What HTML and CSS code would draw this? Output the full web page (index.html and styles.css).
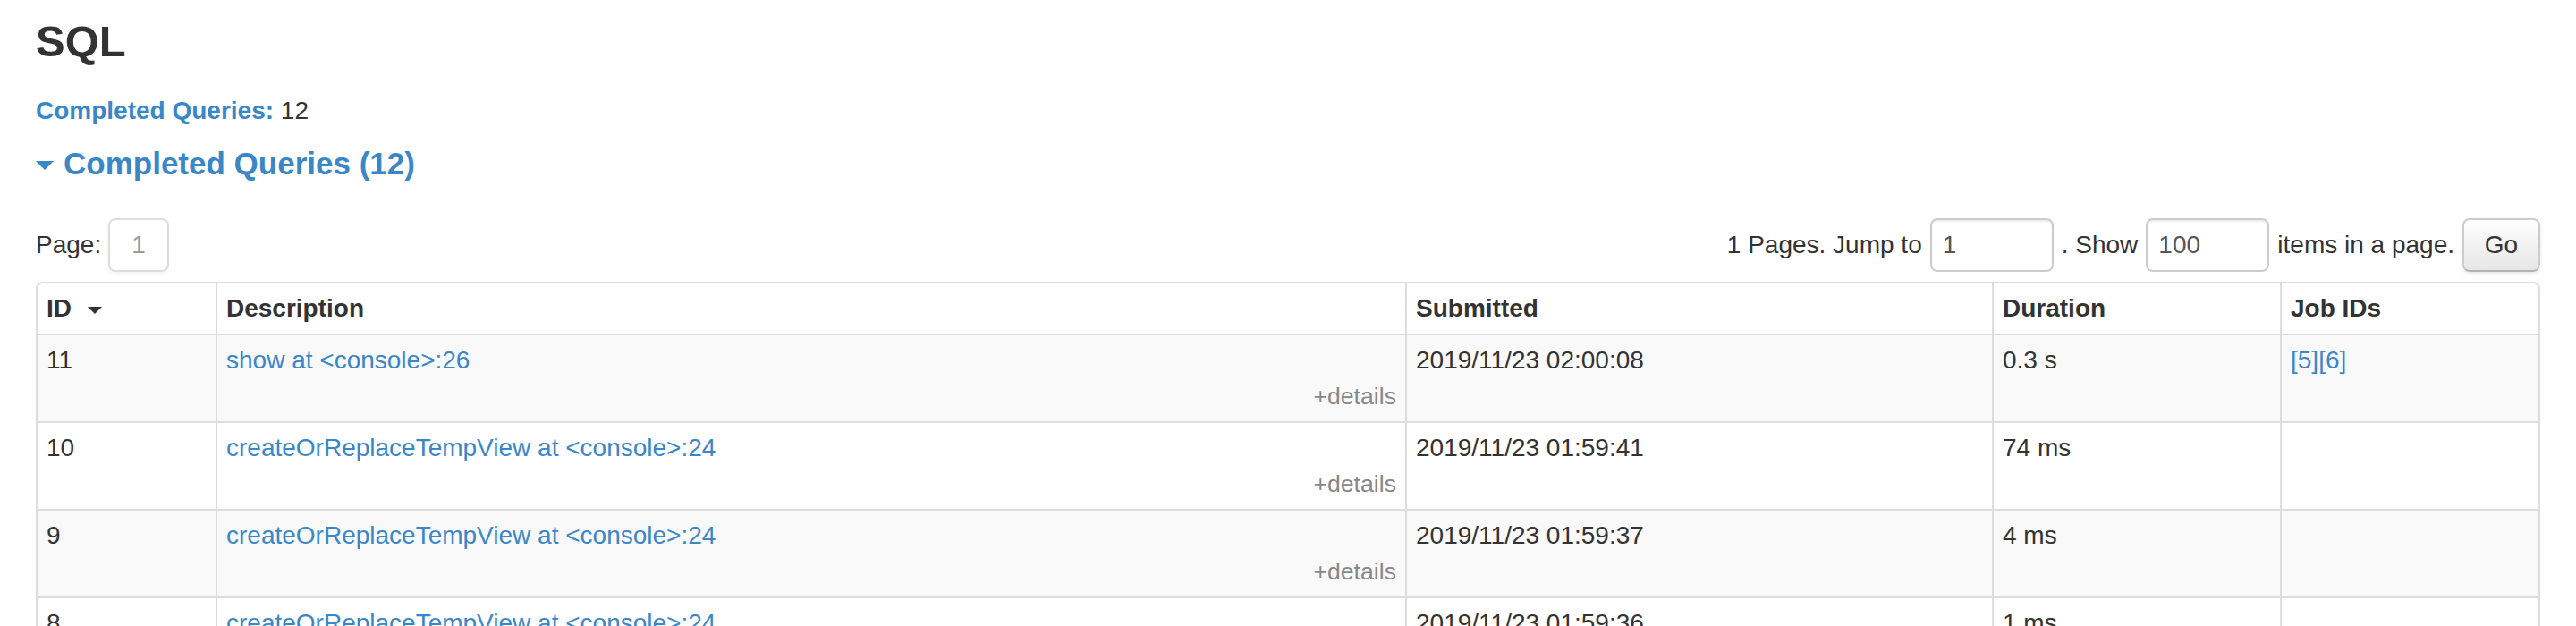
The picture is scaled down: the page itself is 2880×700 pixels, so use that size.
FILE: index.html
```html
<!DOCTYPE html>
<html>
<head>
<meta charset="utf-8">
<title>SQL</title>
<link rel="stylesheet" href="styles.css">
</head>
<body>
<div class="page">
  <h3 class="title">SQL</h3>
  <div class="summary"><a class="summary-label" href="#completed">Completed Queries:</a> 12</div>
  <h4 class="section-head"><span class="arrow-open"></span><a href="#completed">Completed Queries (12)</a></h4>

  <div class="pager">
    <div class="pager-left">
      <span>Page:</span>
      <span class="page-box">1</span>
    </div>
    <form class="pager-right">
      <span>1 Pages. Jump to</span>
      <input class="num-input" type="text" value="1">
      <span>. Show</span>
      <input class="num-input" type="text" value="100">
      <span>items in a page.</span>
      <button class="btn" type="button">Go</button>
    </form>
  </div>

  <table class="queries">
    <thead>
      <tr>
        <th class="c-id">ID<span class="sort-arrow"></span></th>
        <th class="c-desc">Description</th>
        <th class="c-sub">Submitted</th>
        <th class="c-dur">Duration</th>
        <th class="c-job">Job IDs</th>
      </tr>
    </thead>
    <tbody>
      <tr>
        <td>11</td>
        <td><a href="#">show at &lt;console&gt;:26</a><div class="details">+details</div></td>
        <td>2019/11/23 02:00:08</td>
        <td>0.3 s</td>
        <td><a href="#">[5]</a><a href="#">[6]</a></td>
      </tr>
      <tr>
        <td>10</td>
        <td><a href="#">createOrReplaceTempView at &lt;console&gt;:24</a><div class="details">+details</div></td>
        <td>2019/11/23 01:59:41</td>
        <td>74 ms</td>
        <td></td>
      </tr>
      <tr>
        <td>9</td>
        <td><a href="#">createOrReplaceTempView at &lt;console&gt;:24</a><div class="details">+details</div></td>
        <td>2019/11/23 01:59:37</td>
        <td>4 ms</td>
        <td></td>
      </tr>
      <tr>
        <td>8</td>
        <td><a href="#">createOrReplaceTempView at &lt;console&gt;:24</a><div class="details">+details</div></td>
        <td>2019/11/23 01:59:36</td>
        <td>1 ms</td>
        <td></td>
      </tr>
    </tbody>
  </table>
</div>
</body>
</html>
```

FILE: styles.css
```css
html, body {
  margin: 0;
  padding: 0;
  background: #ffffff;
}

body {
  font-family: "Liberation Sans", Arial, Helvetica, sans-serif;
  font-size: 28px;
  line-height: 40px;
  color: #333333;
}

a {
  color: #3a87c8;
  text-decoration: none;
}

.page {
  padding: 0 40px;
}

.title {
  margin: 6px 0 0;
  font-size: 49px;
  line-height: 80px;
  font-weight: bold;
  color: #333333;
}

.summary {
  margin-top: 18px;
  height: 40px;
}

.summary-label {
  font-weight: bold;
}

.section-head {
  margin: 19px 0 0;
  font-size: 35px;
  line-height: 40px;
  font-weight: bold;
  display: flex;
  align-items: center;
}

.section-head a {
  color: #3a87c8;
}

.arrow-open {
  display: inline-block;
  width: 0;
  height: 0;
  border-left: 10px solid transparent;
  border-right: 10px solid transparent;
  border-top: 10px solid #3a87c8;
  margin-right: 11px;
  margin-top: 4px;
}

.pager {
  margin-top: 41px;
  height: 60px;
  display: flex;
  justify-content: space-between;
  align-items: center;
}

.pager-left {
  display: flex;
  align-items: center;
  gap: 8px;
}

.page-box {
  box-sizing: border-box;
  height: 60px;
  padding: 8px 24px;
  border: 2px solid #dddddd;
  border-radius: 8px;
  color: #999999;
  background: #ffffff;
  box-shadow: 0 2px 4px rgba(0, 0, 0, 0.05);
}

.pager-right {
  margin: 0;
  display: flex;
  align-items: center;
  gap: 9px;
}

.num-input {
  box-sizing: border-box;
  width: 138px;
  height: 60px;
  padding: 8px 12px;
  border: 2px solid #cccccc;
  border-radius: 8px;
  font-family: inherit;
  font-size: 28px;
  line-height: 40px;
  color: #555555;
  background: #ffffff;
  box-shadow: inset 0 2px 2px rgba(0, 0, 0, 0.075);
  outline: none;
}

.btn {
  box-sizing: border-box;
  width: 87px;
  height: 60px;
  padding: 0;
  font-family: inherit;
  font-size: 28px;
  line-height: 40px;
  color: #333333;
  background: linear-gradient(to bottom, #ffffff, #e6e6e6);
  border: 2px solid #cccccc;
  border-bottom-color: #b3b3b3;
  border-radius: 8px;
  box-shadow: inset 0 2px 0 rgba(255, 255, 255, 0.2), 0 2px 4px rgba(0, 0, 0, 0.1);
}

.queries {
  margin-top: 11px;
  width: 100%;
  table-layout: fixed;
  border-collapse: separate;
  border-spacing: 0;
  border: 2px solid #dddddd;
  border-radius: 8px;
}

.queries th,
.queries td {
  box-sizing: border-box;
  padding: 8px 10px;
  line-height: 40px;
  text-align: left;
  border-left: 2px solid #dddddd;
}

.queries th:first-child,
.queries td:first-child {
  border-left: none;
}

.queries th {
  font-weight: bold;
  vertical-align: bottom;
}

.queries td {
  vertical-align: top;
  border-top: 2px solid #dddddd;
}

.queries tbody tr:nth-child(odd) td {
  background: #f9f9f9;
}

.c-id { width: 199px; }
.c-desc { width: 1330px; }
.c-sub { width: 656px; }
.c-dur { width: 322px; }

.sort-arrow {
  display: inline-block;
  width: 0;
  height: 0;
  margin-left: 18px;
  border-left: 8px solid transparent;
  border-right: 8px solid transparent;
  border-top: 8px solid #333333;
  vertical-align: middle;
}

.details {
  text-align: right;
  font-size: 26.67px;
  line-height: 40px;
  color: #888888;
}
```
